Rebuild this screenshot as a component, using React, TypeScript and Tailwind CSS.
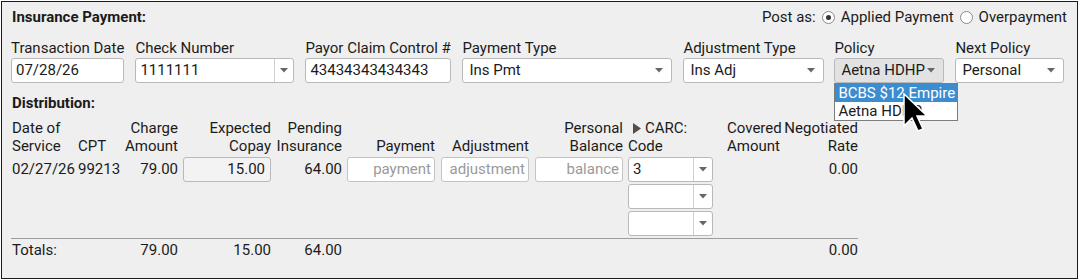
import React from 'react';

function Caret() {
  return (
    <svg width="8" height="5" viewBox="0 0 8 5" className="shrink-0">
      <path d="M0 0 L8 0 L4 4.5 Z" fill="#666" />
    </svg>
  );
}

function TextBox({ value, w }: { value: string; w: string }) {
  return (
    <div className={`${w} h-[25px] bg-white border border-[#b9b9b9] rounded-[3px] flex items-center px-[4px]`}>
      {value}
    </div>
  );
}

// combo box with a separate arrow button
function Combo({ value, w }: { value: string; w: string }) {
  return (
    <div className={`${w} h-[25px] bg-white border border-[#b9b9b9] rounded-[3px] flex`}>
      <div className="flex-1 flex items-center px-[4px]">{value}</div>
      <div className="w-[19px] border-l border-[#cfcfcf] flex items-center justify-center">
        <Caret />
      </div>
    </div>
  );
}

// plain native-looking select
function Select({ value, w, gray }: { value: string; w: string; gray?: boolean }) {
  return (
    <div
      className={`${w} h-[25px] border border-[#b9b9b9] rounded-[3px] flex items-center justify-between pl-[6px] pr-[8px] ${
        gray ? 'bg-[#e2e2e2]' : 'bg-white'
      }`}
    >
      <span>{value}</span>
      <Caret />
    </div>
  );
}

function Field({ label, children }: { label: string; children: React.ReactNode }) {
  return (
    <div className="flex flex-col">
      <div className="h-[20px] leading-[20px]">{label}</div>
      {children}
    </div>
  );
}

function Radio({ checked }: { checked?: boolean }) {
  return (
    <span className="w-[13px] h-[13px] rounded-full border border-[#8a8a8a] bg-white flex items-center justify-center">
      {checked && <span className="w-[5px] h-[5px] rounded-full bg-[#333]" />}
    </span>
  );
}

function Placeholder({ text }: { text: string }) {
  return (
    <div className="w-[88px] h-[25px] bg-white border border-[#c4c4c4] rounded-[3px] flex items-center justify-end pr-[3px] text-[#9a9a9a]">
      {text}
    </div>
  );
}

const cols =
  'grid grid-cols-[64px_47px_58px_94px_70px_94px_94px_94px_90px_68px_76px]';

export default function App() {
  return (
    <div className="relative m-[1px] w-[1077px] h-[278px] border border-[#1a1a1a] bg-[#efefef] font-['Roboto',sans-serif] text-[15px] text-[#1b1b1b] px-[9px] pt-[5px]">
      {/* Title row */}
      <div className="h-[20px] flex items-center justify-between">
        <div className="font-bold pl-[1px]">Insurance Payment:</div>
        <div className="flex items-center gap-[6px] pr-[1px]">
          <span>Post as:</span>
          <Radio checked />
          <span>Applied Payment</span>
          <Radio />
          <span>Overpayment</span>
        </div>
      </div>

      {/* Header fields */}
      <div className="mt-[11px] flex gap-[11px]">
        <Field label="Transaction Date">
          <TextBox value="07/28/26" w="w-[113px]" />
        </Field>
        <Field label="Check Number">
          <Combo value="1111111" w="w-[159px]" />
        </Field>
        <Field label="Payor Claim Control #">
          <TextBox value="43434343434343" w="w-[146px]" />
        </Field>
        <Field label="Payment Type">
          <Select value="Ins Pmt" w="w-[210px]" />
        </Field>
        <Field label="Adjustment Type">
          <Select value="Ins Adj" w="w-[141px]" />
        </Field>
        <div className="relative -ml-[1px]">
          <Field label="Policy">
            <Select value="Aetna HDHP" w="w-[110px]" gray />
          </Field>
          <div className="absolute left-0 top-[45px] w-[124px] bg-white border border-[#7d7d7d] z-10">
            <div className="h-[18px] leading-[18px] bg-[#3b8dd0] text-white pl-[3px]">BCBS $12 Empire</div>
            <div className="h-[18px] leading-[18px] pl-[3px]">Aetna HDHP</div>
          </div>
        </div>
        <Field label="Next Policy">
          <Select value="Personal" w="w-[109px]" />
        </Field>
      </div>

      <div className="mt-[10px] h-[20px] leading-[20px] font-bold pl-[1px]">Distribution:</div>

      {/* Column headers */}
      <div className={`${cols} mt-[6px] leading-[18px] items-end`}>
        <div className="pl-[1px]">Date of<br />Service</div>
        <div className="pl-[3px]">CPT</div>
        <div className="text-right pr-[2px]">Charge<br />Amount</div>
        <div className="text-right pr-[3px]">Expected<br />Copay</div>
        <div className="text-right pr-[2px]">Pending<br />Insurance</div>
        <div className="text-right pr-[3px]">Payment</div>
        <div className="text-right pr-[3px]">Adjustment</div>
        <div className="text-right pr-[3px]">Personal<br />Balance</div>
        <div className="pl-[2px]">
          <div className="flex items-center">
            <svg width="8" height="11" viewBox="0 0 8 11" className="ml-[5px] mr-[4px]">
              <path d="M0 0 L8 5.5 L0 11 Z" fill="#5a4a48" />
            </svg>
            CARC:
          </div>
          Code
        </div>
        <div className="pl-[11px]">Covered<br />Amount</div>
        <div className="text-right pr-[2px]">Negotiated<br />Rate</div>
      </div>

      {/* Data row */}
      <div className={`${cols} mt-[2px] items-start`}>
        <div className="h-[25px] flex items-center pl-[1px]">02/27/26</div>
        <div className="h-[25px] flex items-center pl-[3px]">99213</div>
        <div className="h-[25px] flex items-center justify-end pr-[2px]">79.00</div>
        <div className="pl-[3px]">
          <div className="w-[88px] h-[25px] bg-[#f3f3f3] border border-[#b9b9b9] rounded-[3px] flex items-center justify-end pr-[5px]">
            15.00
          </div>
        </div>
        <div className="h-[25px] flex items-center justify-end pr-[2px]">64.00</div>
        <div className="pl-[3px]"><Placeholder text="payment" /></div>
        <div className="pl-[3px]"><Placeholder text="adjustment" /></div>
        <div className="pl-[3px]"><Placeholder text="balance" /></div>
        <div className="pl-[2px] flex flex-col gap-[2px]">
          <Combo value="3" w="w-[85px]" />
          <Combo value="" w="w-[85px]" />
          <Combo value="" w="w-[85px]" />
        </div>
        <div />
        <div className="h-[25px] flex items-center justify-end pr-[2px]">0.00</div>
      </div>

      <div className="mt-[2px] w-[847px] border-t border-[#9c9c9c]" />

      {/* Totals */}
      <div className={`${cols} mt-[2px] leading-[18px]`}>
        <div className="pl-[1px]">Totals:</div>
        <div />
        <div className="text-right pr-[2px]">79.00</div>
        <div className="text-right pr-[3px]">15.00</div>
        <div className="text-right pr-[2px]">64.00</div>
        <div />
        <div />
        <div />
        <div />
        <div />
        <div className="text-right pr-[2px]">0.00</div>
      </div>

      {/* mouse pointer */}
      <svg
        className="absolute left-[901px] top-[91px] z-20"
        width="26"
        height="40"
        viewBox="-1 -1 26 40"
      >
        <path
          d="M0 0 L0 32 L8 24 L14 37 L19 35 L13 22 L23 22 Z"
          fill="#000"
          stroke="#fff"
          strokeWidth="1.5"
          strokeLinejoin="miter"
        />
      </svg>
    </div>
  );
}
